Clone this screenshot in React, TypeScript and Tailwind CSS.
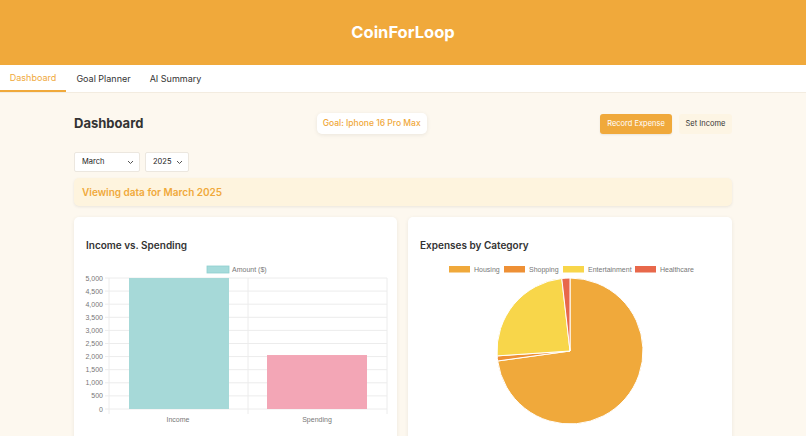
import React from "react";

const yTicks = [5000, 4500, 4000, 3500, 3000, 2500, 2000, 1500, 1000, 500, 0];

function BarChart() {
  const top = 18;
  const bottom = 149;
  const left = 35;
  const right = 313;
  const yOf = (v: number) => bottom - ((bottom - top) * v) / 5000;
  return (
    <svg width="323" height="176" className="block" style={{ fontFamily: '"Liberation Sans", Arial, sans-serif' }}>
      <rect x="133" y="6" width="22" height="7" fill="#a6dbdb" stroke="#8fd0d0" strokeWidth="0.8" />
      <text x="158" y="12.3" fontSize="7" fill="#777">Amount ($)</text>
      {yTicks.map((v) => (
        <g key={v}>
          <line x1={left - 4} x2={right} y1={yOf(v)} y2={yOf(v)} stroke="#ececec" strokeWidth="1" />
          <text x={29} y={yOf(v) + 2.5} fontSize="7" fill="#777" textAnchor="end">
            {v.toLocaleString("en-US")}
          </text>
        </g>
      ))}
      {[left, 174, right].map((x) => (
        <line key={x} x1={x} x2={x} y1={top} y2={bottom + 5} stroke="#ececec" strokeWidth="1" />
      ))}
      <rect x="55" y={yOf(5000)} width="100" height={bottom - yOf(5000)} fill="#a6d9d8" />
      <rect x="193" y={yOf(2060)} width="100" height={bottom - yOf(2060)} fill="#f3a6b6" />
      <text x="104" y="162" fontSize="7" fill="#777" textAnchor="middle">Income</text>
      <text x="243" y="162" fontSize="7" fill="#777" textAnchor="middle">Spending</text>
    </svg>
  );
}

function PieChart() {
  const cx = 162;
  const cy = 91;
  const r = 73;
  const data = [
    { label: "Housing", value: 1500, color: "#f0a93b" },
    { label: "Shopping", value: 23, color: "#ee9035" },
    { label: "Entertainment", value: 500, color: "#f8d64a" },
    { label: "Healthcare", value: 37, color: "#e8684b" },
  ];
  const total = data.reduce((s, d) => s + d.value, 0);
  let acc = 0;
  const pt = (a: number) => [cx + r * Math.sin(a), cy - r * Math.cos(a)];
  const slices = data.map((d) => {
    const a0 = (acc / total) * Math.PI * 2;
    acc += d.value;
    const a1 = (acc / total) * Math.PI * 2;
    const [x0, y0] = pt(a0);
    const [x1, y1] = pt(a1);
    const large = a1 - a0 > Math.PI ? 1 : 0;
    return (
      <path
        key={d.label}
        d={`M${cx},${cy} L${x0},${y0} A${r},${r} 0 ${large} 1 ${x1},${y1} Z`}
        fill={d.color}
        stroke="#fff"
        strokeWidth="1"
      />
    );
  });
  const legend = [
    { x: 41, tx: 66, label: "Housing", color: "#f0a93b" },
    { x: 96, tx: 121, label: "Shopping", color: "#ee9035" },
    { x: 155, tx: 180, label: "Entertainment", color: "#f8d64a" },
    { x: 227, tx: 252, label: "Healthcare", color: "#e8684b" },
  ];
  return (
    <svg width="324" height="176" className="block" style={{ fontFamily: '"Liberation Sans", Arial, sans-serif' }}>
      {legend.map((l) => (
        <g key={l.label}>
          <rect x={l.x} y="6" width="21" height="6.5" fill={l.color} />
          <text x={l.tx} y="12.2" fontSize="7" fill="#777">{l.label}</text>
        </g>
      ))}
      {slices}
    </svg>
  );
}

export default function App() {
  return (
    <div className="min-h-[436px] bg-[#fdf8ef]" style={{ fontFamily: 'Inter, "Liberation Sans", Arial, sans-serif' }}>
      <header className="h-[65px] bg-[#f0a93b] flex items-center justify-center">
        <h1 className="text-[16.5px] font-bold text-white">CoinForLoop</h1>
      </header>
      <nav className="h-[28px] bg-white border-b border-[#f3ece0] flex">
        <div className="w-[66px] flex items-center justify-center text-[9px] text-[#f0a93b] border-b-2 border-[#f0a93b]">
          Dashboard
        </div>
        <div className="w-[75px] flex items-center justify-center text-[9px] text-[#333]">Goal Planner</div>
        <div className="w-[69px] flex items-center justify-center text-[9px] text-[#333]">AI Summary</div>
      </nav>
      <main className="w-[658px] mx-auto pt-[20px]">
        <div className="flex items-center justify-between h-[21px]">
          <h2 className="text-[13px] font-bold text-[#333]">Dashboard</h2>
          <div className="h-[21px] px-[6px] flex items-center rounded-[5px] bg-white shadow-[0_1px_4px_rgba(0,0,0,0.08)] text-[8.5px] font-medium text-[#f0a93b]">
            Goal: Iphone 16 Pro Max
          </div>
          <div className="flex items-center gap-[7px]">
            <div className="h-[20px] w-[72px] flex items-center justify-center rounded-[3px] bg-[#f0a93b] text-white text-[7.5px] shadow-[0_1px_2px_rgba(0,0,0,0.08)]">
              Record Expense
            </div>
            <div className="h-[20px] w-[53px] flex items-center justify-center rounded-[3px] bg-[#fdf5e4] text-[#333] text-[7.5px]">
              Set Income
            </div>
          </div>
        </div>
        <div className="flex gap-[5px] mt-[18px]">
          <div className="h-[20px] w-[66px] bg-white border border-[#ece7df] rounded-[2px] flex items-center justify-between pl-[7px] pr-[5px] text-[7.5px] text-[#222]">
            <span>March</span>
            <svg width="7" height="5" viewBox="0 0 7 5"><path d="M1 1l2.5 2.5L6 1" fill="none" stroke="#555" strokeWidth="1" /></svg>
          </div>
          <div className="h-[20px] w-[44px] bg-white border border-[#ece7df] rounded-[2px] flex items-center justify-between pl-[7px] pr-[5px] text-[7.5px] text-[#222]">
            <span>2025</span>
            <svg width="7" height="5" viewBox="0 0 7 5"><path d="M1 1l2.5 2.5L6 1" fill="none" stroke="#555" strokeWidth="1" /></svg>
          </div>
        </div>
        <div className="mt-[6px] h-[28px] rounded-[5px] bg-[#fef4de] shadow-[0_1px_3px_rgba(0,0,0,0.08)] flex items-center px-[8px] text-[10px] font-semibold text-[#f0a93b]">
          Viewing data for March 2025
        </div>
        <div className="grid grid-cols-[323px_324px] gap-[11px] mt-[11px]">
          <div className="bg-white rounded-[5px] shadow-[0_1px_4px_rgba(0,0,0,0.07)] h-[230px]">
            <h3 className="pt-[21px] pl-[12px] text-[10px] font-semibold text-[#333] h-[43px]">Income vs. Spending</h3>
            <BarChart />
          </div>
          <div className="bg-white rounded-[5px] shadow-[0_1px_4px_rgba(0,0,0,0.07)] h-[230px]">
            <h3 className="pt-[21px] pl-[12px] text-[10px] font-semibold text-[#333] h-[43px]">Expenses by Category</h3>
            <PieChart />
          </div>
        </div>
      </main>
    </div>
  );
}
